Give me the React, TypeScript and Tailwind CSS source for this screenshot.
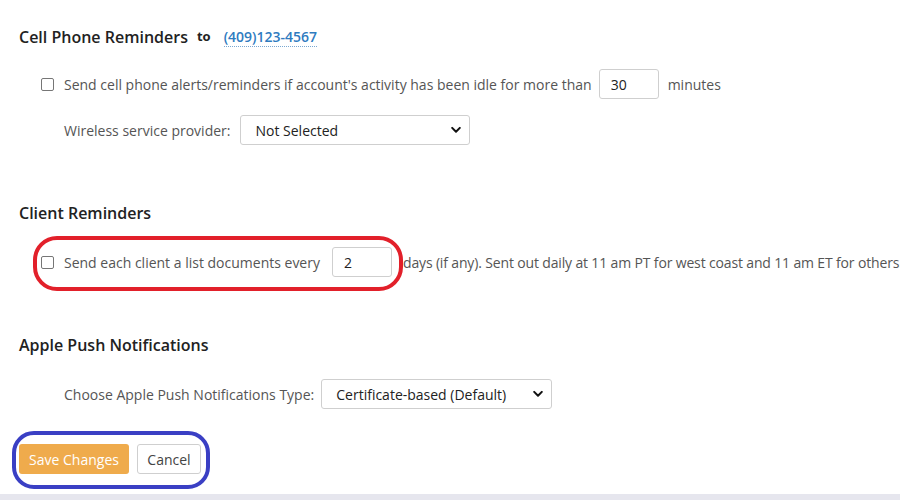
import { useState } from 'react';

function Chevron() {
  return (
    <svg
      className="pointer-events-none absolute right-[9px] top-1/2 -translate-y-1/2"
      width="10"
      height="7"
      viewBox="0 0 10 7"
      fill="none"
    >
      <path d="M1.2 1.4 5 5.2 8.8 1.4" stroke="#111" strokeWidth="2" strokeLinecap="round" strokeLinejoin="round" />
    </svg>
  );
}

function Select({ value, width }: { value: string; width: string }) {
  return (
    <div className={`relative h-[30px] ${width}`}>
      <select
        defaultValue={value}
        className="h-full w-full appearance-none rounded-[3px] border border-[#cfcfcf] bg-white pl-[14px] text-[14px] text-[#222] outline-none"
      >
        <option>{value}</option>
      </select>
      <Chevron />
    </div>
  );
}

function Check() {
  return (
    <input
      type="checkbox"
      className="h-[13px] w-[13px] shrink-0 appearance-none rounded-[2px] border border-[#767676] bg-white"
    />
  );
}

export default function App() {
  const [idle, setIdle] = useState('30');
  const [days, setDays] = useState('2');

  return (
    <div
      className="h-[500px] w-[900px] overflow-hidden bg-white text-[#555]"
      style={{ fontFamily: '"Open Sans", "Liberation Sans", sans-serif' }}
    >
      <div className="px-[19px] pt-[25px]">
        {/* Cell phone */}
        <div className="flex h-[24px] items-center text-[#222]">
          <h2 className="text-[16px] font-semibold">Cell Phone Reminders</h2>
          <span className="ml-[9px] text-[13px] font-bold">to</span>
          <a className="ml-[13px] border-b border-dotted border-[#7aa8d2] text-[14px] font-semibold leading-[18px] text-[#2f7bbf]">
            (409)123-4567
          </a>
        </div>

        <div className="mt-[20px] flex h-[30px] items-center whitespace-nowrap pl-[22px] text-[14px]">
          <Check />
          <span className="ml-[10px]">Send cell phone alerts/reminders if account's activity has been idle for more than</span>
          <input
            value={idle}
            onChange={(e) => setIdle(e.target.value)}
            className="ml-[7px] h-[30px] w-[60px] rounded-[3px] border border-[#cfcfcf] px-[11px] text-[14px] text-[#222] outline-none"
          />
          <span className="ml-[9px]">minutes</span>
        </div>

        <div className="mt-[16px] flex h-[30px] items-center whitespace-nowrap pl-[45px] text-[14px]">
          <span>Wireless service provider:</span>
          <div className="ml-[10px]">
            <Select value="Not Selected" width="w-[230px]" />
          </div>
        </div>

        {/* Client */}
        <h2 className="mt-[56px] flex h-[24px] items-center text-[16px] font-semibold text-[#222]">Client Reminders</h2>

        <div className="relative mt-[22px] flex h-[30px] items-center whitespace-nowrap pl-[22px] text-[14px]">
          <Check />
          <span className="ml-[10px]">Send each client a list documents every</span>
          <input
            value={days}
            onChange={(e) => setDays(e.target.value)}
            className="ml-[12px] h-[30px] w-[60px] rounded-[3px] border border-[#cfcfcf] px-[11px] text-[14px] text-[#222] outline-none"
          />
          <span className="ml-[11px] tracking-[-0.15px]">
            days (if any). Sent out daily at 11 am PT for west coast and 11 am ET for others.
          </span>
          <div className="pointer-events-none absolute left-[14px] top-[-11px] h-[55px] w-[370px] rounded-[24px] border-[4px] border-[#e2202a]" />
        </div>

        {/* Apple */}
        <h2 className="mt-[56px] flex h-[24px] items-center text-[16px] font-semibold text-[#222]">Apple Push Notifications</h2>

        <div className="mt-[22px] flex h-[30px] items-center whitespace-nowrap pl-[45px] text-[14px]">
          <span>Choose Apple Push Notifications Type:</span>
          <div className="ml-[7px]">
            <Select value="Certificate-based (Default)" width="w-[231px]" />
          </div>
        </div>

        <div className="relative mt-[35px] flex h-[30px] items-center gap-[8px]">
          <button className="h-[30px] w-[110px] rounded-[3px] bg-[#efab4c] text-[14px] text-white">Save Changes</button>
          <button className="h-[30px] w-[64px] rounded-[3px] border border-[#cfcfcf] bg-white text-[14px] text-[#444]">Cancel</button>
          <div className="pointer-events-none absolute left-[-7px] top-[-13px] h-[58px] w-[198px] rounded-[22px] border-[4px] border-[#3a3fc4]" />
        </div>
      </div>

      <div className="mt-[20px] h-[6px] bg-[#e6e6ee]" />
    </div>
  );
}
